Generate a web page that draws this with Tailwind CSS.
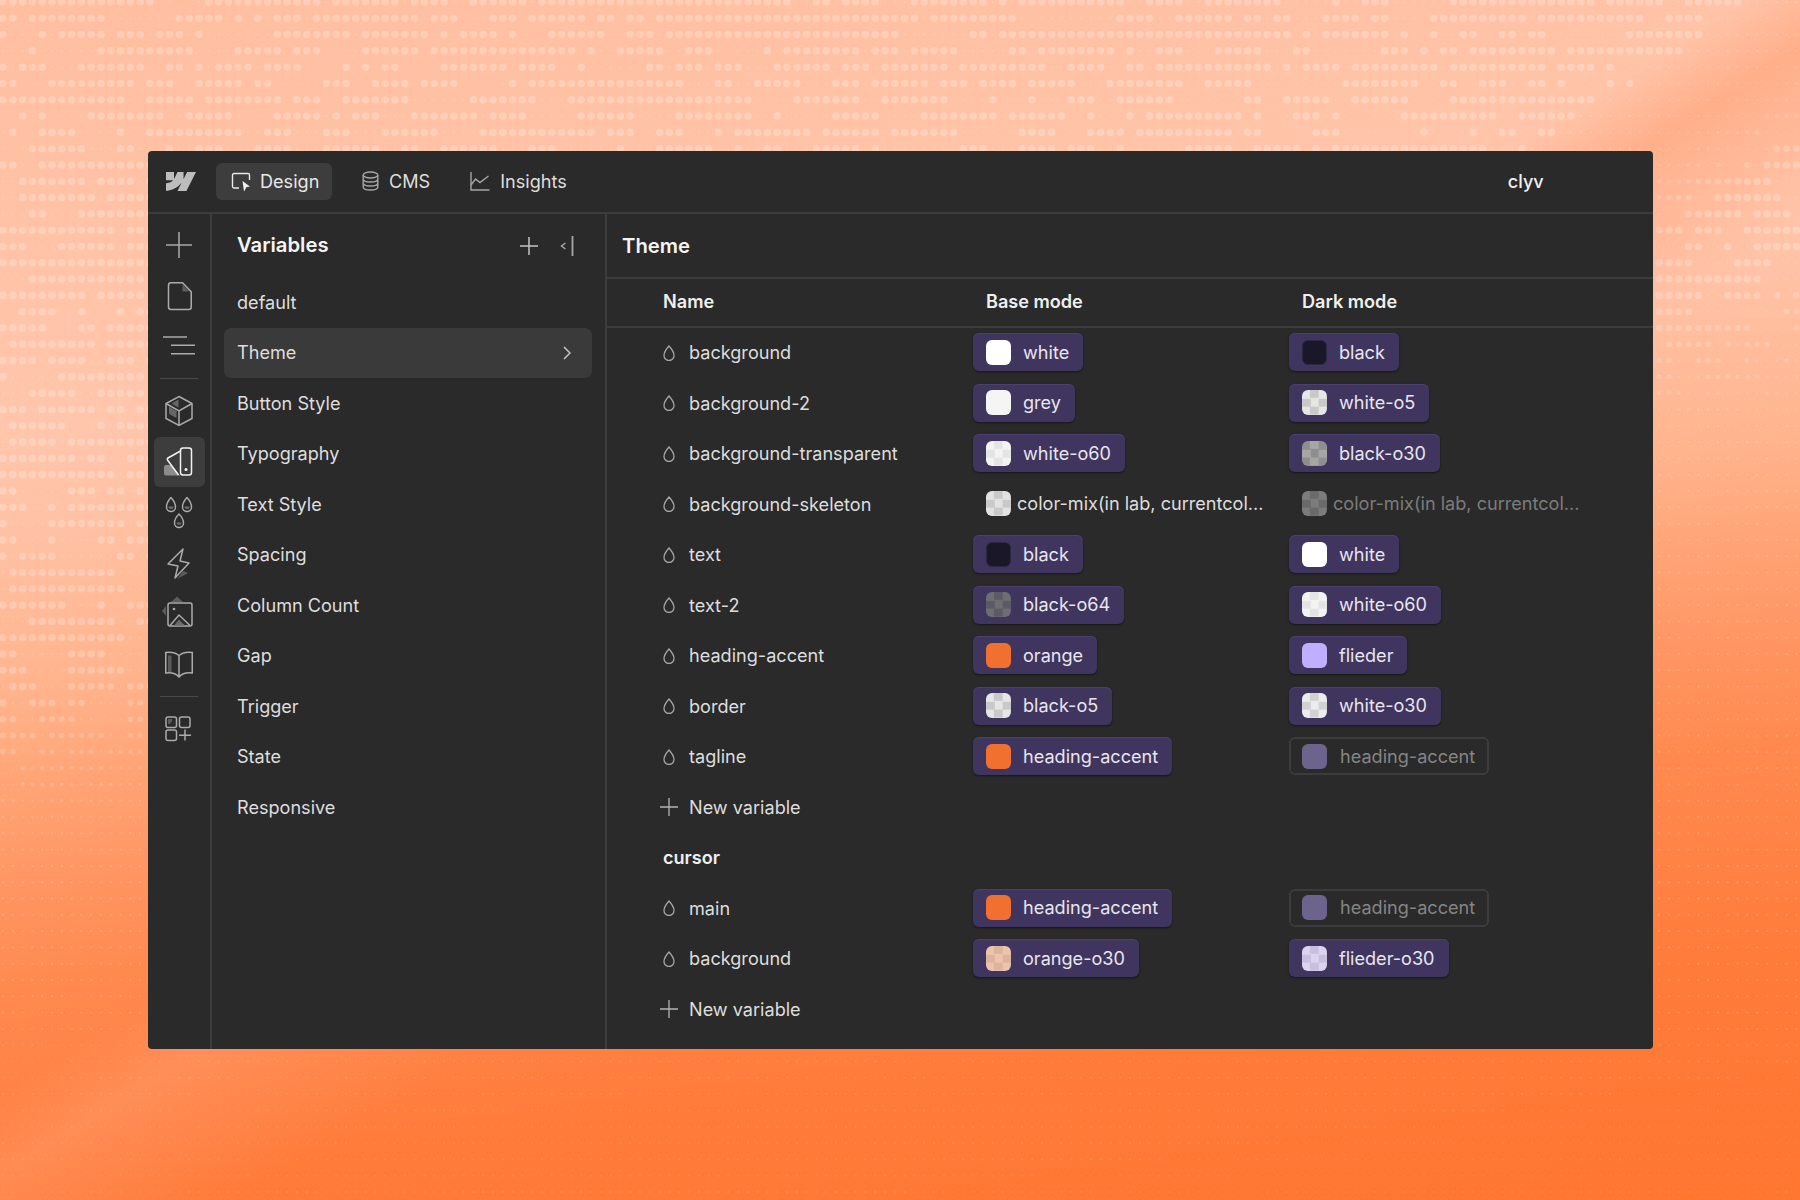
<!DOCTYPE html>
<html lang="en">
<head>
  <meta charset="UTF-8" />
  <title>Variables</title>
  <script src="https://cdn.jsdelivr.net/npm/@tailwindcss/browser@4"></script>
</head>
<body class="font-['Inter','Noto_Sans',sans-serif]">
<div class="relative h-[1200px] w-[1800px] overflow-hidden bg-[linear-gradient(148deg,transparent_47%,#ff9a6a80_50.5%,transparent_58%),linear-gradient(172deg,#ffbea0_0%,#ffc6ac_30%,#ffc2a6_36%,#ffb48d_47.5%,#ffa274_55%,#ff9460_62%,#ff8a50_68%,#ff7b3a_83%,#ff7731_100%)]">
  <!-- dotted backdrop, filled in by the script below -->
  <svg id="dots" class="absolute inset-0" width="1800" height="1200" fill="#fff"></svg>

  <div class="relative pl-[148px] pt-[151px]">
    <div class="flex h-[898px] w-[1505px] flex-col overflow-hidden rounded-[4px] bg-[#2a2a2a] text-[18.1px] text-[#dedede]">

      <!-- top bar -->
      <div class="flex h-[63px] shrink-0 items-center border-b-2 border-[#3c3c3c]">
        <svg class="ml-[18px] h-[19px] w-[30px]" viewBox="0 4.5 24 15" preserveAspectRatio="none" fill="#bdbdbd"><path d="M24 4.515l-7.658 14.97H9.149l3.205-6.204h-.144C9.566 16.713 5.621 18.973 0 19.485v-6.118s3.596-.213 5.71-2.435H0V4.515h6.417v5.278l.144-.001 2.622-5.277h4.854v5.244h.144l2.72-5.244H24z"/></svg>
        <div class="ml-[20px] flex h-[37px] w-[116px] items-center gap-[9px] rounded-[6px] bg-[#3d3d3d] pl-[15px] text-[#e8e8e8]">
          <svg class="h-[20px] w-[20px]" viewBox="0 0 20 20" fill="none" stroke="#e8e8e8" stroke-width="1.4"><path d="M8 16H3a1.5 1.5 0 0 1-1.5-1.5V3A1.5 1.5 0 0 1 3 1.5h14A1.5 1.5 0 0 1 18.5 3v5"/><path d="M11.5 9l7.5 5.5-3.4.6-2.6 4.4z" fill="#f2f2f2" stroke="none"/></svg>
          <span>Design</span>
        </div>
        <div class="ml-[30px] flex items-center gap-[10px]">
          <svg class="h-[20px] w-[17px]" viewBox="0 0 17 20" fill="none" stroke="#a6a6a6" stroke-width="1.4"><ellipse cx="8.5" cy="4" rx="7.3" ry="3"/><path d="M1.2 4v12c0 1.7 3.3 3 7.3 3s7.3-1.300 7.300-3V4M1.200 8c0 1.700 3.300 3 7.300 3s7.300-1.300 7.300-3M1.200 12c0 1.700 3.300 3 7.300 3s7.300-1.300 7.300-3"/></svg>
          <span>CMS</span>
        </div>
        <div class="ml-[40px] flex items-center gap-[10px]">
          <svg class="h-[20px] w-[20px]" viewBox="0 0 20 20" fill="none" stroke="#a6a6a6" stroke-width="1.4"><path d="M1 1v18h18.500"/><path d="M1 14l4.500-6 4.500 3.500L18.500 5"/></svg>
          <span>Insights</span>
        </div>
        <span class="ml-[941px] font-medium text-[#f0f0f0]">clyv</span>
      </div>

      <div class="flex min-h-0 flex-1">
        <!-- tool rail -->
        <div class="flex w-[64px] shrink-0 flex-col items-center border-r-2 border-[#3c3c3c] pt-[6px]">
          <div class="flex h-[50.5px] w-[51px] items-center justify-center">
            <svg class="h-[36px] w-[36px]" viewBox="0 0 36 36" fill="none" stroke="#ababab" stroke-width="1.5"><path d="M5 18h26M18 5v26"/></svg>
          </div>
          <div class="flex h-[50.5px] w-[51px] items-center justify-center">
            <svg class="h-[36px] w-[36px]" viewBox="0 0 36 36" fill="none" stroke="#ababab" stroke-width="1.5"><path d="M10 4.750h11.500l8.750 9V29a2.500 2.500 0 0 1-2.500 2.500H10A2.500 2.500 0 0 1 7.500 29V7.250A2.500 2.500 0 0 1 10 4.750z"/><path d="M21.500 6.500l7 7h-7z" fill="#5c5c5c" stroke="none"/></svg>
          </div>
          <div class="flex h-[50.5px] w-[51px] items-center justify-center">
            <svg class="h-[36px] w-[36px]" viewBox="0 0 36 36" fill="none" stroke="#ababab" stroke-width="1.5"><path d="M2 9h24M10 17.300h24M10 25.700h24"/></svg>
          </div>
          <div class="flex h-[14.5px] items-center"><div class="h-[1px] w-[38px] bg-[#4a4a4a]"></div></div>
          <div class="flex h-[50.5px] w-[51px] items-center justify-center">
            <svg class="h-[36px] w-[36px]" viewBox="0 0 36 36" fill="none" stroke="#ababab" stroke-width="1.5"><path d="M18 3.500l13 7v15l-13 7-13-7v-15z"/><path d="M5 10.500L18 18l13-7.500M18 18v14.500"/><path d="M17.500 6.500L10.500 10.500l7 4zM8 13.500l7.500 4.500v7L8 21z" fill="#666" stroke="none"/></svg>
          </div>
          <div class="flex h-[50.5px] w-[51px] items-center justify-center rounded-[6px] bg-[#3d3d3d]">
            <svg class="h-[36px] w-[36px]" viewBox="0 0 36 36" fill="none" stroke="#f2f2f2" stroke-width="1.500"><path d="M3 23q0-2 2-2h5l9 10.500H5q-2 0-2-2z" fill="#8c8c8c" stroke="none"/><path d="M19.500 7L7 14a1.500 1.500 0 0 0-.5 2L17.500 31"/><rect x="19.500" y="4" width="11" height="27" rx="2.500" fill="#3d3d3d"/><circle cx="25" cy="25.500" r="1.500" fill="#f2f2f2" stroke="none"/></svg>
          </div>
          <div class="flex h-[50.5px] w-[51px] items-center justify-center">
            <svg class="h-[36px] w-[36px]" viewBox="0 0 36 36" fill="none" stroke="#ababab" stroke-width="1.400"><path d="M10 3.500S5.500 8.500 5.500 13a4.500 4.500 0 0 0 9 0C14.500 8.500 10 3.500 10 3.500z"/><path d="M26 3.500S21.500 8.500 21.500 13a4.500 4.500 0 0 0 9 0c0-4.500-4.500-9.500-4.500-9.500z"/><path d="M18 20s-4.500 4.500-4.500 9a4.500 4.500 0 0 0 9 0c0-4.500-4.500-9-4.500-9z"/><path d="M7.500 12.500h5a2.500 2.500 0 0 1-5 0zM23.500 12.500h5a2.500 2.500 0 0 1-5 0zM15.500 28.500h5a2.500 2.500 0 0 1-5 0z" fill="#6b6b6b" stroke="none"/></svg>
          </div>
          <div class="flex h-[50.5px] w-[51px] items-center justify-center">
            <svg class="h-[36px] w-[36px]" viewBox="0 0 36 36" fill="none" stroke="#ababab" stroke-width="1.500"><path d="M22 4L7 19l10 2-3 12 14-15-9-2z" stroke-linejoin="round"/><path d="M16 34l11-6-4.500-2z" fill="#5c5c5c" stroke="none"/></svg>
          </div>
          <div class="flex h-[50.5px] w-[51px] items-center justify-center">
            <svg class="h-[36px] w-[36px]" viewBox="0 0 36 36" fill="none" stroke="#ababab" stroke-width="1.500"><path d="M10 7l6-5.500L22 7zM1 16l4-5v10z" fill="#5c5c5c" stroke="none"/><rect x="7" y="8" width="24" height="23" rx="2"/><path d="M9 30.500l9-10.500 11 10.500"/><path d="M13 30.500l5-6 6 6z" fill="#6b6b6b" stroke="none"/><circle cx="13" cy="14" r="1.300" fill="#ababab" stroke="none"/></svg>
          </div>
          <div class="flex h-[50.5px] w-[51px] items-center justify-center">
            <svg class="h-[36px] w-[36px]" viewBox="0 0 36 36" fill="none" stroke="#ababab" stroke-width="1.500"><path d="M18 9.500C15 7 9 6 4.750 6.500V27c4.250-.500 10.250.500 13.250 4 3-3.500 9-4.500 13.250-4V6.500C27 6 21 7 18 9.500zM18 9.500V31"/><path d="M7 9.500h3.500V26H7z" fill="#5c5c5c" stroke="none"/></svg>
          </div>
          <div class="flex h-[14px] items-center"><div class="h-[1px] w-[38px] bg-[#4a4a4a]"></div></div>
          <div class="flex h-[50.5px] w-[51px] items-center justify-center">
            <svg class="h-[36px] w-[36px]" viewBox="0 0 36 36" fill="none" stroke="#ababab" stroke-width="1.500"><rect x="5" y="7" width="10.500" height="10.500" rx="2"/><rect x="18.500" y="7" width="10.500" height="10.500" rx="2"/><rect x="5" y="20" width="10.500" height="10.500" rx="2"/><path d="M18 25.200h12M24 19.500v11"/><path d="M7 9h4v2.500L8.500 14H7z" fill="#5c5c5c" stroke="none"/></svg>
          </div>
        </div>

        <!-- variables panel -->
        <div class="w-[395px] shrink-0 border-r-2 border-[#3c3c3c] pl-[12px] pr-[13px]">
          <div class="flex h-[63px] items-center justify-between pl-[13px] pr-[18px]">
            <span class="text-[20.3px] font-semibold text-[#f4f4f4]">Variables</span>
            <div class="flex items-center gap-[22px]">
              <svg class="h-[18px] w-[18px]" viewBox="0 0 18 18" fill="none" stroke="#c4c4c4" stroke-width="1.500"><path d="M0 9h18M9 0v18"/></svg>
              <svg class="h-[20px] w-[14px]" viewBox="0 0 14 20" fill="none" stroke="#a6a6a6" stroke-width="1.500"><path d="M5.500 7l-4 3 4 3"/><path d="M12.500 0v20" stroke-width="1.800"/></svg>
            </div>
          </div>
          <div class="flex h-[50.5px] items-center pl-[13px]">default</div>
          <div class="flex h-[50.5px] items-center justify-between rounded-[7px] bg-[#3a3a3a] pl-[13px] pr-[21px]">
            <span>Theme</span>
            <svg class="h-[14px] w-[8px]" viewBox="0 0 8 14" fill="none" stroke="#c4c4c4" stroke-width="1.500"><path d="M1 1l6 6-6 6"/></svg>
          </div>
          <div class="flex h-[50.5px] items-center pl-[13px]">Button Style</div>
          <div class="flex h-[50.5px] items-center pl-[13px]">Typography</div>
          <div class="flex h-[50.5px] items-center pl-[13px]">Text Style</div>
          <div class="flex h-[50.5px] items-center pl-[13px]">Spacing</div>
          <div class="flex h-[50.5px] items-center pl-[13px]">Column Count</div>
          <div class="flex h-[50.5px] items-center pl-[13px]">Gap</div>
          <div class="flex h-[50.5px] items-center pl-[13px]">Trigger</div>
          <div class="flex h-[50.5px] items-center pl-[13px]">State</div>
          <div class="flex h-[50.5px] items-center pl-[13px]">Responsive</div>
        </div>

        <!-- theme table -->
        <div class="min-w-0 flex-1">
          <div class="flex h-[64.5px] items-center border-b-2 border-[#3c3c3c] pl-[15px] pt-[1px] text-[20.3px] font-semibold text-[#f4f4f4]">Theme</div>
          <div class="flex h-[49px] items-center border-b-2 border-[#3c3c3c] font-semibold text-[#efefef]">
            <span class="w-[379px] pl-[56px]">Name</span>
            <span class="w-[316px]">Base mode</span>
            <span>Dark mode</span>
          </div>

          <div class="flex h-[50.5px] items-center">
            <div class="flex w-[366px] items-center gap-[14px] pl-[56px]"><svg class="h-[16px] w-[12px]" viewBox="0 0 12 16" fill="none" stroke="#a6a6a6" stroke-width="1.300"><path d="M6 1S1 6.500 1 10.500a5 5 0 0 0 10 0C11 6.500 6 1 6 1z"/></svg>background</div>
            <div class="w-[316px]"><div class="inline-flex h-[38px] items-center gap-[12px] rounded-[6px] bg-[#40355f] pl-[13px] pr-[14px] text-[#e8e6ee] shadow-[inset_0_1px_0_#4b4070,0_1px_2px_#161616]"><span class="h-[25px] w-[25px] rounded-[6px] bg-white"></span>white</div></div>
            <div><div class="inline-flex h-[38px] items-center gap-[12px] rounded-[6px] bg-[#40355f] pl-[13px] pr-[14px] text-[#e8e6ee] shadow-[inset_0_1px_0_#4b4070,0_1px_2px_#161616]"><span class="h-[25px] w-[25px] rounded-[6px] border border-[#2c2840] bg-[#1a1728]"></span>black</div></div>
          </div>
          <div class="flex h-[50.5px] items-center">
            <div class="flex w-[366px] items-center gap-[14px] pl-[56px]"><svg class="h-[16px] w-[12px]" viewBox="0 0 12 16" fill="none" stroke="#a6a6a6" stroke-width="1.300"><path d="M6 1S1 6.500 1 10.500a5 5 0 0 0 10 0C11 6.500 6 1 6 1z"/></svg>background-2</div>
            <div class="w-[316px]"><div class="inline-flex h-[38px] items-center gap-[12px] rounded-[6px] bg-[#40355f] pl-[13px] pr-[14px] text-[#e8e6ee] shadow-[inset_0_1px_0_#4b4070,0_1px_2px_#161616]"><span class="h-[25px] w-[25px] rounded-[6px] bg-[#f5f5f5]"></span>grey</div></div>
            <div><div class="inline-flex h-[38px] items-center gap-[12px] rounded-[6px] bg-[#40355f] pl-[13px] pr-[14px] text-[#e8e6ee] shadow-[inset_0_1px_0_#4b4070,0_1px_2px_#161616]"><span class="h-[25px] w-[25px] rounded-[6px] bg-[image:repeating-conic-gradient(#c9c9c9_0_25%,#e6e6e6_0_50%)] bg-[length:16.67px_16.67px]"></span>white-o5</div></div>
          </div>
          <div class="flex h-[50.5px] items-center">
            <div class="flex w-[366px] items-center gap-[14px] pl-[56px]"><svg class="h-[16px] w-[12px]" viewBox="0 0 12 16" fill="none" stroke="#a6a6a6" stroke-width="1.300"><path d="M6 1S1 6.500 1 10.500a5 5 0 0 0 10 0C11 6.500 6 1 6 1z"/></svg>background-transparent</div>
            <div class="w-[316px]"><div class="inline-flex h-[38px] items-center gap-[12px] rounded-[6px] bg-[#40355f] pl-[13px] pr-[14px] text-[#e8e6ee] shadow-[inset_0_1px_0_#4b4070,0_1px_2px_#161616]"><span class="h-[25px] w-[25px] rounded-[6px] bg-[image:repeating-conic-gradient(#e4e4e4_0_25%,#f3f3f3_0_50%)] bg-[length:16.67px_16.67px]"></span>white-o60</div></div>
            <div><div class="inline-flex h-[38px] items-center gap-[12px] rounded-[6px] bg-[#40355f] pl-[13px] pr-[14px] text-[#e8e6ee] shadow-[inset_0_1px_0_#4b4070,0_1px_2px_#161616]"><span class="h-[25px] w-[25px] rounded-[6px] bg-[image:repeating-conic-gradient(#a6a6a6_0_25%,#8e8e8e_0_50%)] bg-[length:16.67px_16.67px]"></span>black-o30</div></div>
          </div>
          <div class="flex h-[50.5px] items-center">
            <div class="flex w-[366px] items-center gap-[14px] pl-[56px]"><svg class="h-[16px] w-[12px]" viewBox="0 0 12 16" fill="none" stroke="#a6a6a6" stroke-width="1.300"><path d="M6 1S1 6.500 1 10.500a5 5 0 0 0 10 0C11 6.500 6 1 6 1z"/></svg>background-skeleton</div>
            <div class="w-[316px]"><div class="inline-flex h-[38px] items-center gap-[6px] pl-[13px] pr-[12px]"><span class="h-[25px] w-[25px] rounded-[6px] bg-[image:repeating-conic-gradient(#c9c9c9_0_25%,#e2e2e2_0_50%)] bg-[length:16.67px_16.67px]"></span>color-mix(in lab, currentcol...</div></div>
            <div><div class="inline-flex h-[38px] items-center gap-[6px] pl-[13px] pr-[12px] text-[#7c7c7c]"><span class="h-[25px] w-[25px] rounded-[6px] bg-[image:repeating-conic-gradient(#6a6a6a_0_25%,#7c7c7c_0_50%)] bg-[length:16.67px_16.67px]"></span>color-mix(in lab, currentcol...</div></div>
          </div>
          <div class="flex h-[50.5px] items-center">
            <div class="flex w-[366px] items-center gap-[14px] pl-[56px]"><svg class="h-[16px] w-[12px]" viewBox="0 0 12 16" fill="none" stroke="#a6a6a6" stroke-width="1.300"><path d="M6 1S1 6.500 1 10.500a5 5 0 0 0 10 0C11 6.500 6 1 6 1z"/></svg>text</div>
            <div class="w-[316px]"><div class="inline-flex h-[38px] items-center gap-[12px] rounded-[6px] bg-[#40355f] pl-[13px] pr-[14px] text-[#e8e6ee] shadow-[inset_0_1px_0_#4b4070,0_1px_2px_#161616]"><span class="h-[25px] w-[25px] rounded-[6px] border border-[#2c2840] bg-[#1a1728]"></span>black</div></div>
            <div><div class="inline-flex h-[38px] items-center gap-[12px] rounded-[6px] bg-[#40355f] pl-[13px] pr-[14px] text-[#e8e6ee] shadow-[inset_0_1px_0_#4b4070,0_1px_2px_#161616]"><span class="h-[25px] w-[25px] rounded-[6px] bg-white"></span>white</div></div>
          </div>
          <div class="flex h-[50.5px] items-center">
            <div class="flex w-[366px] items-center gap-[14px] pl-[56px]"><svg class="h-[16px] w-[12px]" viewBox="0 0 12 16" fill="none" stroke="#a6a6a6" stroke-width="1.300"><path d="M6 1S1 6.500 1 10.500a5 5 0 0 0 10 0C11 6.500 6 1 6 1z"/></svg>text-2</div>
            <div class="w-[316px]"><div class="inline-flex h-[38px] items-center gap-[12px] rounded-[6px] bg-[#40355f] pl-[13px] pr-[14px] text-[#e8e6ee] shadow-[inset_0_1px_0_#4b4070,0_1px_2px_#161616]"><span class="h-[25px] w-[25px] rounded-[6px] bg-[image:repeating-conic-gradient(#5c5a66_0_25%,#6e6e72_0_50%)] bg-[length:16.67px_16.67px]"></span>black-o64</div></div>
            <div><div class="inline-flex h-[38px] items-center gap-[12px] rounded-[6px] bg-[#40355f] pl-[13px] pr-[14px] text-[#e8e6ee] shadow-[inset_0_1px_0_#4b4070,0_1px_2px_#161616]"><span class="h-[25px] w-[25px] rounded-[6px] bg-[image:repeating-conic-gradient(#e4e4e4_0_25%,#f3f3f3_0_50%)] bg-[length:16.67px_16.67px]"></span>white-o60</div></div>
          </div>
          <div class="flex h-[50.5px] items-center">
            <div class="flex w-[366px] items-center gap-[14px] pl-[56px]"><svg class="h-[16px] w-[12px]" viewBox="0 0 12 16" fill="none" stroke="#a6a6a6" stroke-width="1.300"><path d="M6 1S1 6.500 1 10.500a5 5 0 0 0 10 0C11 6.500 6 1 6 1z"/></svg>heading-accent</div>
            <div class="w-[316px]"><div class="inline-flex h-[38px] items-center gap-[12px] rounded-[6px] bg-[#40355f] pl-[13px] pr-[14px] text-[#e8e6ee] shadow-[inset_0_1px_0_#4b4070,0_1px_2px_#161616]"><span class="h-[25px] w-[25px] rounded-[6px] bg-[#f2702f]"></span>orange</div></div>
            <div><div class="inline-flex h-[38px] items-center gap-[12px] rounded-[6px] bg-[#40355f] pl-[13px] pr-[14px] text-[#e8e6ee] shadow-[inset_0_1px_0_#4b4070,0_1px_2px_#161616]"><span class="h-[25px] w-[25px] rounded-[6px] bg-[#bfb0ff]"></span>flieder</div></div>
          </div>
          <div class="flex h-[50.5px] items-center">
            <div class="flex w-[366px] items-center gap-[14px] pl-[56px]"><svg class="h-[16px] w-[12px]" viewBox="0 0 12 16" fill="none" stroke="#a6a6a6" stroke-width="1.300"><path d="M6 1S1 6.500 1 10.500a5 5 0 0 0 10 0C11 6.500 6 1 6 1z"/></svg>border</div>
            <div class="w-[316px]"><div class="inline-flex h-[38px] items-center gap-[12px] rounded-[6px] bg-[#40355f] pl-[13px] pr-[14px] text-[#e8e6ee] shadow-[inset_0_1px_0_#4b4070,0_1px_2px_#161616]"><span class="h-[25px] w-[25px] rounded-[6px] bg-[image:repeating-conic-gradient(#c9c9c9_0_25%,#e6e6e6_0_50%)] bg-[length:16.67px_16.67px]"></span>black-o5</div></div>
            <div><div class="inline-flex h-[38px] items-center gap-[12px] rounded-[6px] bg-[#40355f] pl-[13px] pr-[14px] text-[#e8e6ee] shadow-[inset_0_1px_0_#4b4070,0_1px_2px_#161616]"><span class="h-[25px] w-[25px] rounded-[6px] bg-[image:repeating-conic-gradient(#d2d2d2_0_25%,#ececec_0_50%)] bg-[length:16.67px_16.67px]"></span>white-o30</div></div>
          </div>
          <div class="flex h-[50.5px] items-center">
            <div class="flex w-[366px] items-center gap-[14px] pl-[56px]"><svg class="h-[16px] w-[12px]" viewBox="0 0 12 16" fill="none" stroke="#a6a6a6" stroke-width="1.300"><path d="M6 1S1 6.500 1 10.500a5 5 0 0 0 10 0C11 6.500 6 1 6 1z"/></svg>tagline</div>
            <div class="w-[316px]"><div class="inline-flex h-[38px] items-center gap-[12px] rounded-[6px] bg-[#40355f] pl-[13px] pr-[14px] text-[#e8e6ee] shadow-[inset_0_1px_0_#4b4070,0_1px_2px_#161616]"><span class="h-[25px] w-[25px] rounded-[6px] bg-[#f2702f]"></span>heading-accent</div></div>
            <div><div class="inline-flex h-[38px] items-center gap-[13px] rounded-[6px] border-2 border-[#3c3c3c] pl-[11px] pr-[12px] text-[#858585]"><span class="h-[25px] w-[25px] rounded-[6px] bg-[#6c648c]"></span>heading-accent</div></div>
          </div>
          <div class="flex h-[50.5px] items-center gap-[11px] pl-[53px]">
            <svg class="h-[18px] w-[18px]" viewBox="0 0 18 18" fill="none" stroke="#b4b4b4" stroke-width="1.300"><path d="M0 9h18M9 0v18"/></svg>New variable
          </div>
          <div class="flex h-[50.5px] items-center pl-[56px] font-semibold text-[#efefef]">cursor</div>
          <div class="flex h-[50.5px] items-center">
            <div class="flex w-[366px] items-center gap-[14px] pl-[56px]"><svg class="h-[16px] w-[12px]" viewBox="0 0 12 16" fill="none" stroke="#a6a6a6" stroke-width="1.300"><path d="M6 1S1 6.500 1 10.500a5 5 0 0 0 10 0C11 6.500 6 1 6 1z"/></svg>main</div>
            <div class="w-[316px]"><div class="inline-flex h-[38px] items-center gap-[12px] rounded-[6px] bg-[#40355f] pl-[13px] pr-[14px] text-[#e8e6ee] shadow-[inset_0_1px_0_#4b4070,0_1px_2px_#161616]"><span class="h-[25px] w-[25px] rounded-[6px] bg-[#f2702f]"></span>heading-accent</div></div>
            <div><div class="inline-flex h-[38px] items-center gap-[13px] rounded-[6px] border-2 border-[#3c3c3c] pl-[11px] pr-[12px] text-[#858585]"><span class="h-[25px] w-[25px] rounded-[6px] bg-[#6c648c]"></span>heading-accent</div></div>
          </div>
          <div class="flex h-[50.5px] items-center">
            <div class="flex w-[366px] items-center gap-[14px] pl-[56px]"><svg class="h-[16px] w-[12px]" viewBox="0 0 12 16" fill="none" stroke="#a6a6a6" stroke-width="1.300"><path d="M6 1S1 6.500 1 10.500a5 5 0 0 0 10 0C11 6.500 6 1 6 1z"/></svg>background</div>
            <div class="w-[316px]"><div class="inline-flex h-[38px] items-center gap-[12px] rounded-[6px] bg-[#40355f] pl-[13px] pr-[14px] text-[#e8e6ee] shadow-[inset_0_1px_0_#4b4070,0_1px_2px_#161616]"><span class="h-[25px] w-[25px] rounded-[6px] bg-[image:repeating-conic-gradient(#dcb39c_0_25%,#ecc4ac_0_50%)] bg-[length:16.67px_16.67px]"></span>orange-o30</div></div>
            <div><div class="inline-flex h-[38px] items-center gap-[12px] rounded-[6px] bg-[#40355f] pl-[13px] pr-[14px] text-[#e8e6ee] shadow-[inset_0_1px_0_#4b4070,0_1px_2px_#161616]"><span class="h-[25px] w-[25px] rounded-[6px] bg-[image:repeating-conic-gradient(#c6c0de_0_25%,#dad4f0_0_50%)] bg-[length:16.67px_16.67px]"></span>flieder-o30</div></div>
          </div>
          <div class="flex h-[50.5px] items-center gap-[11px] pl-[53px]">
            <svg class="h-[18px] w-[18px]" viewBox="0 0 18 18" fill="none" stroke="#b4b4b4" stroke-width="1.300"><path d="M0 9h18M9 0v18"/></svg>New variable
          </div>
        </div>
      </div>
    </div>
  </div>
</div>

<script>
  // dots: random runs on a 9.8 x 16.3 grid, big up top, shrinking towards the bottom
  var seed = 7;
  function rand() {
    seed = (seed * 16807) % 2147483647;
    return seed / 2147483647;
  }
  var out = '';
  for (var r = 0; r < 74; r++) {
    var on = rand() < 0.7;
    for (var c = 0; c < 185; c++) {
      if (rand() < (on ? 0.2 : 0.42)) on = !on;
      var x = 3 + c * 9.8, y = 2 + r * 16.3;
      var edge = 690 - x * 0.236;
      var k = Math.min(1, Math.max(0, (edge + 150 - y) / 150));
      var s = x * 0.53 + y * 0.848;
      if (s > 936 && s < 1090) k = Math.min(k, Math.max(0, (s - 1010) / 80));
      var size = on ? 1.2 + 2.6 * k : 1;
      var alpha = on ? 0.16 + 0.06 * k : 0.16;
      if (y > 1040) alpha = 0.1;
      out += '<circle cx="' + x.toFixed(1) + '" cy="' + y.toFixed(1) + '" r="' + size.toFixed(1) + '" opacity="' + alpha.toFixed(2) + '"/>';
    }
  }
  document.getElementById('dots').innerHTML = out;
</script>
</body>
</html>
